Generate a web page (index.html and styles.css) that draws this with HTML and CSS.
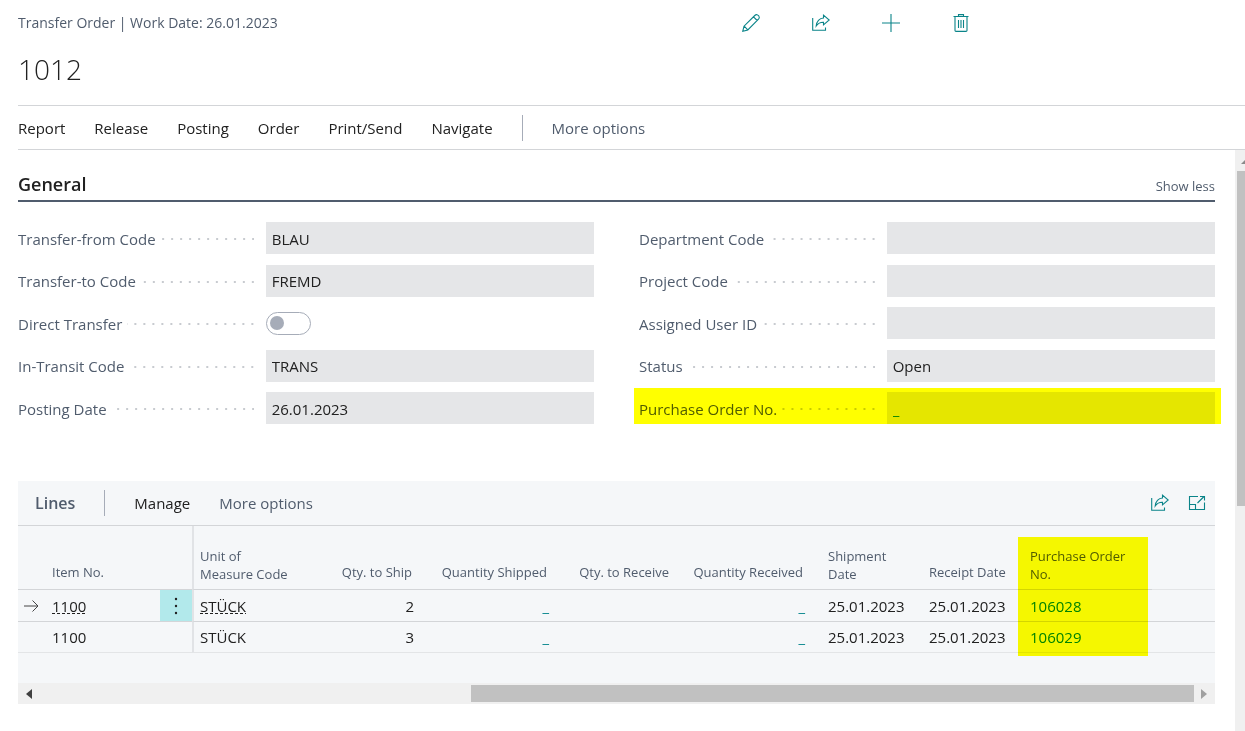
FILE: index.html
```html
<!DOCTYPE html>
<html lang="en">
<head>
<meta charset="utf-8">
<title>Transfer Order 1012</title>
<link rel="stylesheet" href="styles.css">
</head>
<body>
<svg class="sprite" aria-hidden="true">
  <symbol id="share" viewBox="0 0 18 18"><path d="M.7 4V16.300H13.500V13.500M11.500 1.200 17.200 6 11.500 10.800V8.300C8.500 8.200 6 9.500 4.200 12 4.500 7.500 7.500 4.200 11.500 4Z"/></symbol>
</svg>
<div class="page">
  <header class="page-head">
    <div class="caption">Transfer Order | Work Date: 26.01.2023</div>
    <div class="actions">
      <button class="icon-btn" aria-label="Edit"><svg viewBox="0 0 18 18"><path d="M.8 17.200 2 12.200 12.800 1.500Q14 .3 15.200 .8 17.200 1.500 17.300 3.500 17.200 4.500 16.500 5.200L5.800 16ZM11.500 2.800 15.200 6.500M2.200 12.200 5.800 15.800"/></svg></button>
      <button class="icon-btn" aria-label="Share"><svg viewBox="0 0 18 18"><use href="#share"/></svg></button>
      <button class="icon-btn" aria-label="New"><svg viewBox="0 0 18 18"><path d="M9 0V18M0 9H18"/></svg></button>
      <button class="icon-btn" aria-label="Delete"><svg viewBox="0 0 18 18"><path d="M1.500 2.500H16.500M3 2.500V16.500Q3 17.400 4 17.400H14Q15 17.400 15 16.500V2.500M6.500 2.500V.6H11.500V2.500M6.500 6V14M9 6V14M11.500 6V14"/></svg></button>
    </div>
  </header>
  <h1 class="title">1012</h1>
  <nav class="menu" aria-label="Actions">
    <button>Report</button><button>Release</button><button>Posting</button><button>Order</button><button>Print/Send</button><button>Navigate</button>
    <span class="divider"></span>
    <button class="muted">More options</button>
  </nav>
  <div class="body">
    <main class="content">
      <section class="general">
        <div class="section-head"><h2>General</h2><button class="show-less">Show less</button></div>
        <div class="form">
          <div class="form-col">
            <div class="field"><label for="from">Transfer-from Code</label><span class="dots"></span><input id="from" value="BLAU" readonly></div>
            <div class="field"><label for="to">Transfer-to Code</label><span class="dots"></span><input id="to" value="FREMD" readonly></div>
            <div class="field"><label for="direct">Direct Transfer</label><span class="dots"></span><span class="toggle-cell"><input class="toggle" id="direct" type="checkbox" role="switch"></span></div>
            <div class="field"><label for="transit">In-Transit Code</label><span class="dots"></span><input id="transit" value="TRANS" readonly></div>
            <div class="field"><label for="date">Posting Date</label><span class="dots"></span><input id="date" value="26.01.2023" readonly></div>
          </div>
          <div class="form-col">
            <div class="field"><label for="dept">Department Code</label><span class="dots"></span><input id="dept" readonly></div>
            <div class="field"><label for="project">Project Code</label><span class="dots"></span><input id="project" readonly></div>
            <div class="field"><label for="user">Assigned User ID</label><span class="dots"></span><input id="user" readonly></div>
            <div class="field"><label for="status">Status</label><span class="dots"></span><input id="status" value="Open" readonly></div>
            <div class="field marked"><label for="po">Purchase Order No.</label><span class="dots"></span><input class="linked" id="po" value="_" readonly></div>
          </div>
        </div>
      </section>
      <section class="lines">
        <div class="lines-head">
          <h2>Lines</h2><span class="divider"></span>
          <button>Manage</button><button class="muted">More options</button>
          <div class="lines-tools">
            <button class="icon-btn" aria-label="Share lines"><svg viewBox="0 0 18 18"><use href="#share"/></svg></button>
            <button class="icon-btn" aria-label="Focus mode"><svg viewBox="0 0 18 18"><path d="M10 2.500H1.500V15.500H16.500V8.500M1.500 10.500H7.500V15.500M9.500 9 16 2.500M12 2.500H16.500V6.500"/></svg></button>
          </div>
        </div>
        <table class="grid">
          <colgroup><col class="c-mark"><col class="c-item"><col class="c-menu"><col class="c-uom"><col class="c-ship"><col class="c-shipped"><col class="c-receive"><col class="c-received"><col class="c-date"><col class="c-date"><col class="c-po"><col></colgroup>
          <thead>
            <tr><th></th><th>Item No.</th><th></th><th class="frozen two">Unit of<br>Measure Code</th><th class="num">Qty. to Ship</th><th class="num">Quantity Shipped</th><th class="num">Qty. to Receive</th><th class="num wide">Quantity Received</th><th class="two">Shipment<br>Date</th><th>Receipt Date</th><th class="two marked-col">Purchase Order<br>No.</th><th class="rest"></th></tr>
          </thead>
          <tbody>
            <tr class="current"><td class="mark"><svg class="arrow" viewBox="0 0 16 12"><path d="M0 6H14M8.500 .5 14 6 8.500 11.500"/></svg></td><td><span class="lookup">1100</span></td><td class="row-menu"><button aria-label="Row menu"><svg viewBox="0 0 4 18"><circle cx="2" cy="2" r="1.200"/><circle cx="2" cy="9" r="1.200"/><circle cx="2" cy="16" r="1.200"/></svg></button></td><td class="frozen"><span class="lookup">STÜCK</span></td><td class="num">2</td><td class="num"><a href="#">_</a></td><td></td><td class="num wide"><a href="#">_</a></td><td>25.01.2023</td><td>25.01.2023</td><td><a href="#">106028</a></td><td class="rest"></td></tr>
            <tr><td></td><td>1100</td><td></td><td class="frozen">STÜCK</td><td class="num">3</td><td class="num"><a href="#">_</a></td><td></td><td class="num wide"><a href="#">_</a></td><td>25.01.2023</td><td>25.01.2023</td><td><a href="#">106029</a></td><td class="rest"></td></tr>
          </tbody>
        </table>
        <div class="hscroll"><svg viewBox="0 0 6 10"><path d="M6 0V10L0 5Z"/></svg><div class="track"><div class="thumb"></div></div><svg class="dim" viewBox="0 0 6 10"><path d="M0 0V10L6 5Z"/></svg></div>
      </section>
    </main>
    <div class="vscroll"><div class="up"><svg viewBox="0 0 8 4"><path d="M0 4H8L4 0Z"/></svg></div><div class="vthumb"></div></div>
  </div>
</div>
</body>
</html>
```
FILE: styles.css
```css
* { box-sizing: border-box; }
body {
  margin: 0;
  background: #fff;
  color: #212121;
  font: 15px/20px "Open Sans", "Noto Sans", sans-serif;
  overflow: hidden;
}
button { padding: 0; border: 0; background: none; color: inherit; font: inherit; }
h1, h2 { margin: 0; }
a { color: #00838a; text-decoration: none; }
.sprite { position: absolute; width: 0; height: 0; }

.page { display: flex; flex-direction: column; height: 100vh; padding-left: 18px; }
.page-head { display: flex; justify-content: space-between; align-items: center; padding-top: 13px; color: #505c6d; }
.caption { font-size: 14px; }
.actions { display: flex; gap: 52px; margin-right: 22.4%; }
.icon-btn { display: flex; color: #0a8489; }
.icon-btn svg { width: 18px; height: 18px; fill: none; stroke: currentColor; stroke-width: 1.1; }
.title { padding: 16px 0; font-size: 28px; line-height: 40px; font-weight: 300; }

.menu { display: flex; align-items: center; gap: 29px; min-height: 45px; border: solid #d3d5d8; border-width: 1px 0; }
.divider { width: 1px; height: 26px; background: #a6acb8; }
.muted { color: #505c6d; }

.body { display: flex; flex: 1; min-height: 0; }
.content { flex: 1; min-width: 0; padding-right: 20px; }
.section-head { display: flex; justify-content: space-between; align-items: flex-end; height: 52px; padding-bottom: 4px; border-bottom: 2px solid #505c6d; }
.section-head h2 { font-size: 18px; line-height: 24px; font-weight: 600; }
.show-less { color: #505c6d; font-size: 13px; }

.form { display: grid; grid-template-columns: 1fr 1fr; gap: 45px; padding-top: 20px; }
.form-col { display: flex; flex-direction: column; justify-content: space-between; min-height: 202px; }
.field { position: relative; display: grid; grid-template-columns: auto 1fr 57%; align-items: center; height: 32px; }
.field label { color: #505c6d; padding-top: 1px; }
.dots { height: 2px; margin: 2px 12px 0 5px; background: radial-gradient(circle at 8px 1px, #c8cbd0 1px, transparent 1px) right top / 9px 2px repeat-x; }
.field input:not(.toggle) { width: 100%; height: 32px; border: 0; padding: 1px 6px 0; background: #e5e6e8; color: #212121; font: inherit; }
.field input.linked { color: #00838a; }
.toggle-cell { display: flex; }
.toggle { appearance: none; display: flex; align-items: center; width: 45px; height: 23px; margin: 0; border: 1px solid #a6acb8; border-radius: 12px; padding-left: 3px; }
.toggle::before { content: ""; width: 14px; height: 14px; border-radius: 50%; background: #a6acb8; }
.marked::after, .marked-col::after { content: ""; position: absolute; background: #ff0; mix-blend-mode: multiply; pointer-events: none; }
.marked::after { inset: -4px -6px 0 -5px; }

.lines { margin-top: 57px; background: #f5f7f9; }
.lines-head { display: flex; align-items: center; gap: 29px; min-height: 45px; padding: 0 9px 0 17px; border-bottom: 1px solid #d3d5d8; }
.lines-head h2 { color: #505c6d; font-size: 16px; font-weight: 600; }
.lines-tools { display: flex; gap: 19px; margin-left: auto; }

.grid { width: 100%; table-layout: fixed; border-collapse: separate; border-spacing: 0; }
.c-mark { width: 26px; }
.c-item { width: 116px; }
.c-menu { width: 32px; }
.c-uom { width: 128px; }
.c-ship { width: 100px; }
.c-shipped { width: 135px; }
.c-receive { width: 122px; }
.c-received { width: 143px; }
.c-date { width: 101px; }
.c-po { width: 130px; }
.grid th { height: 64px; padding: 0 8px 8px; border-bottom: 1px solid #d3d5d8; color: #505c6d; font-size: 13px; line-height: 18px; font-weight: 400; text-align: left; vertical-align: bottom; white-space: nowrap; }
.grid td { height: 31px; padding: 0 8px; border-bottom: 1px solid #e3e5e7; white-space: nowrap; }
.grid .current td { height: 32px; border-bottom-color: #d3d5d8; }
.grid .two { padding-bottom: 6px; }
.grid .num { text-align: right; }
.grid td.num { padding-right: 6px; }
.grid th.wide { padding-right: 17px; }
.grid td.wide { padding-right: 15px; }
.grid .rest { border-bottom-color: #e3e5e7; }
.grid .frozen { border-left: 2px solid #e1e3e6; padding-left: 6px; }
.grid .current .mark { padding: 0 0 0 6px; }
.arrow { display: block; width: 16px; height: 12px; fill: none; stroke: #444; }
.lookup { background: repeating-linear-gradient(90deg, #212121 0 3px, transparent 3px 5px) left bottom 2px / 100% 1px no-repeat; }
.grid .current .row-menu { padding: 0; background: #b2e9eb; }
.row-menu button { display: flex; justify-content: center; width: 100%; }
.row-menu svg { width: 4px; height: 18px; fill: #212121; }
.marked-col { position: relative; }
.marked-col::after { top: 11px; left: -4px; width: 130px; height: 119px; }

.hscroll { display: flex; align-items: center; height: 21px; margin-top: 30px; padding: 0 8px; background: #f0f0f0; }
.hscroll svg { width: 6px; height: 10px; fill: #404040; }
.hscroll .dim { fill: #a0a0a0; }
.track { flex: 1; margin: 0 7px; }
.thumb { width: 62.6%; height: 17px; margin-left: auto; background: #c1c1c1; }
.vscroll { width: 10px; overflow: hidden; background: #f0f0f0; }
.up { height: 21px; padding: 10px 0 0 6px; }
.up svg { display: block; width: 8px; height: 4px; fill: #8a8a8a; }
.vthumb { height: 57.7%; margin-left: 2px; background: #c1c1c1; }
```
